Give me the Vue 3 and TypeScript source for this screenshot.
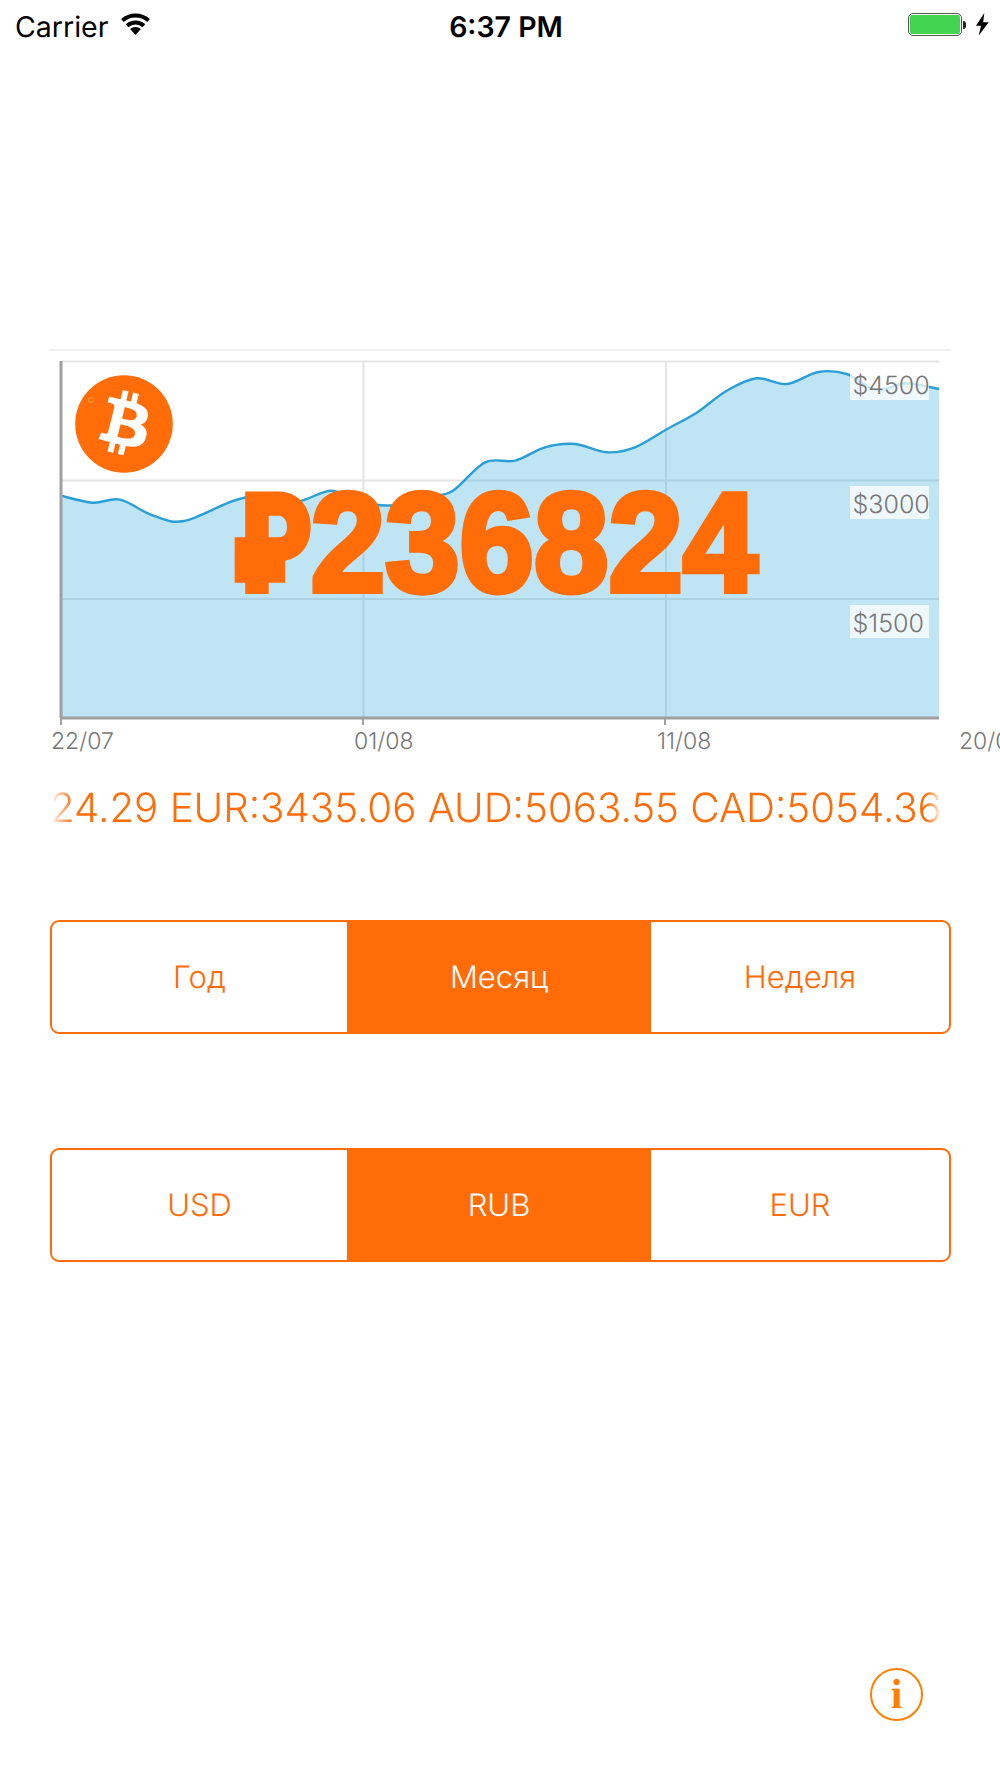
<script setup lang="ts">
import { computed } from 'vue'

type Pt = [number, number]

// price curve, sampled in chart pixels
const curve: Pt[] = [
  [61, 495.7], [92.7, 502.7], [120, 499.7], [153.3, 515.7], [184, 521], [233, 501],
  [265, 495], [296.7, 501.7], [331.7, 490.7], [363, 503], [396.7, 505], [430, 496.7],
  [453, 490.7], [485, 462.3], [515, 460.7], [545, 447.3], [575, 444], [606.7, 452.3],
  [635, 447.3], [666.7, 429.3], [696.7, 412.7], [726.7, 390.7], [756.7, 378.3],
  [786.7, 384], [818.3, 372], [846.7, 374], [876.7, 390], [905, 383.3], [939, 389],
]

const bottom = 369

function smooth(pts: Pt[]): string {
  let d = `M${pts[0][0]} ${pts[0][1] - 349}`
  for (let i = 0; i < pts.length - 1; i++) {
    const p0 = pts[Math.max(i - 1, 0)]
    const p1 = pts[i]
    const p2 = pts[i + 1]
    const p3 = pts[Math.min(i + 2, pts.length - 1)]
    const c1x = p1[0] + (p2[0] - p0[0]) / 6
    const c1y = p1[1] + (p2[1] - p0[1]) / 6 - 349
    const c2x = p2[0] - (p3[0] - p1[0]) / 6
    const c2y = p2[1] - (p3[1] - p1[1]) / 6 - 349
    d += `C${c1x.toFixed(1)} ${c1y.toFixed(1)} ${c2x.toFixed(1)} ${c2y.toFixed(1)} ${p2[0]} ${(p2[1] - 349).toFixed(1)}`
  }
  return d
}

const linePath = computed(() => smooth(curve))
const areaPath = computed(() => `${linePath.value}L939 ${bottom}L61 ${bottom}Z`)

const gridY = [12.5, 131.5, 250]
const gridX = [363.5, 666]
const ticks = [
  { label: '22/07', tx: 51 },
  { label: '01/08', tx: 354 },
  { label: '11/08', tx: 657 },
  { label: '20/08', tx: 959 },
]
const prices = [
  { label: '$4500', y: 23, h: 28, base: 45 },
  { label: '$3000', y: 137, h: 33, base: 164 },
  { label: '$1500', y: 256, h: 33, base: 283 },
]

const periods = ['Год', 'Месяц', 'Неделя']
const currencies = ['USD', 'RUB', 'EUR']
</script>

<template>
  <div class="screen">
    <div class="status-bar">
      <div class="status-left">
        <span>Carrier</span>
        <svg class="wifi" width="29" height="22" viewBox="0 0 29 22">
          <path d="M14.5 22L9.15 16.05A8 8 0 0 1 19.85 16.05Z" fill="#000" />
          <path d="M6.14 12.7A12.5 12.5 0 0 1 22.86 12.7" fill="none" stroke="#000" stroke-width="4" />
          <path d="M1.45 7.5A19.5 19.5 0 0 1 27.55 7.5" fill="none" stroke="#000" stroke-width="4" />
        </svg>
      </div>
      <span class="time">6:37 PM</span>
      <div class="status-right">
        <div class="battery"><div class="battery-fill"></div></div>
        <div class="battery-tip"></div>
        <svg class="bolt" width="13" height="23" viewBox="0 0 13 23">
          <path d="M8.3 0L0 12.7H5L2.7 22.5L12.7 9.3H7.2Z" fill="#000" />
        </svg>
      </div>
    </div>

    <div class="chart">
      <svg class="chart-svg" width="1000" height="420" viewBox="0 0 1000 420">
        <line x1="49" x2="951" y1="1" y2="1" stroke="#f0f0f0" stroke-width="2" />
        <line v-for="y in gridY" :key="y" x1="61" x2="939" :y1="y" :y2="y" stroke="#e4e4e4" stroke-width="2" />
        <line v-for="x in gridX" :key="x" :x1="x" :x2="x" y1="12" :y2="bottom" stroke="#e4e4e4" stroke-width="2" />
        <path :d="areaPath" fill="#2aa5d8" fill-opacity="0.3" />
        <path :d="linePath" fill="none" stroke="#2a9fd6" stroke-width="2.4" />
        <line x1="61" x2="61" y1="12" y2="369" stroke="#a0a0a0" stroke-width="3" />
        <line x1="60" x2="939" y1="369" y2="369" stroke="#a0a0a0" stroke-width="3" />
        <line x1="61" x2="61" y1="369" y2="376" stroke="#a0a0a0" stroke-width="2" />
        <line x1="363" x2="363" y1="369" y2="376" stroke="#a0a0a0" stroke-width="2" />
        <line x1="665" x2="665" y1="369" y2="376" stroke="#a0a0a0" stroke-width="2" />
        <text v-for="t in ticks" :key="t.label" class="tick" :x="t.tx" y="400">{{ t.label }}</text>
        <g v-for="p in prices" :key="p.label">
          <rect x="850" :y="p.y" width="79" :height="p.h" fill="#fff" fill-opacity="0.75" />
          <text class="price-label" x="852.5" :y="p.base">{{ p.label }}</text>
        </g>
      </svg>

      <svg class="coin" width="98" height="98" viewBox="0 0 98 98">
        <circle cx="49" cy="49" r="48.8" fill="#ff6c08" />
        <circle cx="16" cy="25" r="2.5" fill="none" stroke="#f08a2c" stroke-width="1.4" />
        <path
          transform="translate(-1.5 -3) scale(4.3)"
          fill="#fff"
          fill-rule="evenodd"
          d="M17.288 10.291c.24-1.59-.974-2.45-2.64-3.03l.54-2.153-1.315-.33-.525 2.107c-.345-.087-.705-.167-1.064-.25l.526-2.127-1.32-.33-.54 2.165c-.285-.067-.565-.132-.84-.2l-1.815-.45-.35 1.407s.975.225.955.236c.535.136.63.486.615.766l-1.477 5.92c-.075.166-.24.406-.614.314.015.02-.96-.24-.96-.24l-.66 1.51 1.71.426.93.242-.54 2.19 1.32.327.54-2.17c.36.1.705.19 1.05.273l-.51 2.154 1.32.33.545-2.19c2.24.427 3.93.257 4.64-1.774.57-1.637-.03-2.58-1.217-3.196.854-.193 1.5-.76 1.68-1.93h.01zm-3.01 4.22c-.404 1.64-3.157.75-4.05.53l.72-2.9c.896.23 3.757.67 3.33 2.37zm.41-4.24c-.37 1.49-2.662.735-3.405.55l.654-2.64c.744.18 3.137.524 2.75 2.084v.006z"
        />
      </svg>

      <div class="big-price"><span class="rouble">₽</span>236824</div>
    </div>

    <div class="ticker">24.29 EUR:3435.06 AUD:5063.55 CAD:5054.36</div>

    <div class="segments period">
      <div v-for="(p, i) in periods" :key="p" class="segment" :class="{ active: i === 1 }">{{ p }}</div>
    </div>
    <div class="segments currency">
      <div v-for="(c, i) in currencies" :key="c" class="segment" :class="{ active: i === 1 }">{{ c }}</div>
    </div>

    <div class="footer">
      <div class="info">i</div>
    </div>
  </div>
</template>

<style>
html, body { background: #fff; }
</style>

<style scoped>
.screen {
  height: 1778px;
  width: 1000px;
  display: flex;
  flex-direction: column;
  overflow: hidden;
  background: #fff;
  font-family: Inter, "Liberation Sans", sans-serif;
  text-rendering: geometricPrecision;
}
.status-bar {
  height: 52px;
  display: grid;
  grid-template-columns: 1fr auto 1fr;
  align-items: center;
  padding: 0 11px 0 15px;
  font-size: 28.5px;
  color: #000;
}
.status-left { display: flex; align-items: center; gap: 13px; }
.wifi { margin-top: -4px; }
.time { font-weight: 600; margin-left: 8px; }
.status-right { display: flex; align-items: center; justify-content: flex-end; margin-top: -3px; }
.battery {
  width: 54px;
  height: 23px;
  border: 1.5px solid #555;
  border-radius: 5px;
  padding: 1px;
  box-sizing: border-box;
}
.battery-fill { height: 100%; background: #43d551; border-radius: 2px; }
.battery-tip { width: 3px; height: 8px; background: #222; margin: 0 10px 0 1px; border-radius: 0 4px 4px 0; }
.bolt { display: block; }

.chart { position: relative; margin-top: 297px; height: 420px; }
.chart-svg { display: block; }
.tick { font-size: 23px; font-weight: 300; fill: #777; font-family: Inter, sans-serif; }
.price-label { font-size: 25px; font-weight: 300; fill: #777; font-family: Inter, sans-serif; }
.coin { position: absolute; left: 75px; top: 26px; }
.big-price {
  position: absolute;
  left: -8px;
  right: 0;
  top: 109px;
  text-align: center;
  font-family: "Liberation Sans", Roboto, sans-serif;
  font-weight: 700;
  font-size: 138px;
  line-height: 170px;
  color: #ff6c08;
  -webkit-text-stroke: 6px #ff6c08;
  transform: scale(0.97, 1.02);
}
.rouble {
  display: inline-block;
  font-family: Roboto, sans-serif;
  font-weight: 900;
  font-size: 133px;
  transform: scaleX(0.84);
  margin: 0 -10px 0 -8px;
}
.ticker {
  margin: 14px 58px 0 50px;
  font-size: 40.25px;
  font-weight: 350;
  line-height: 50px;
  color: #ff6c08;
  white-space: nowrap;
  overflow: hidden;
  -webkit-mask-image: linear-gradient(90deg, transparent, #000 24px, #000 calc(100% - 16px), transparent);
  mask-image: linear-gradient(90deg, transparent, #000 24px, #000 calc(100% - 16px), transparent);
}
.segments {
  margin: 0 49px 0 50px;
  height: 114px;
  display: grid;
  grid-template-columns: 295px 304px 1fr;
  border: 2px solid #ff6c08;
  border-radius: 9px;
  overflow: hidden;
  box-sizing: border-box;
}
.period { margin-top: 87px; }
.currency { margin-top: 114px; }
.segment {
  display: flex;
  align-items: center;
  justify-content: center;
  font-size: 31px;
  font-weight: 350;
  color: #ff6c08;
}
.segment.active { background: #ff6c08; color: #fff; }
.footer { margin-top: auto; display: flex; justify-content: flex-end; padding: 0 77px 57px 0; }
.info {
  width: 53px;
  height: 53px;
  box-sizing: border-box;
  border: 2px solid #ff8000;
  border-radius: 50%;
  display: flex;
  align-items: center;
  justify-content: center;
  color: #ff8000;
  font-family: "Liberation Serif", serif;
  font-weight: 700;
  font-size: 42px;
  line-height: 1;
}
</style>
